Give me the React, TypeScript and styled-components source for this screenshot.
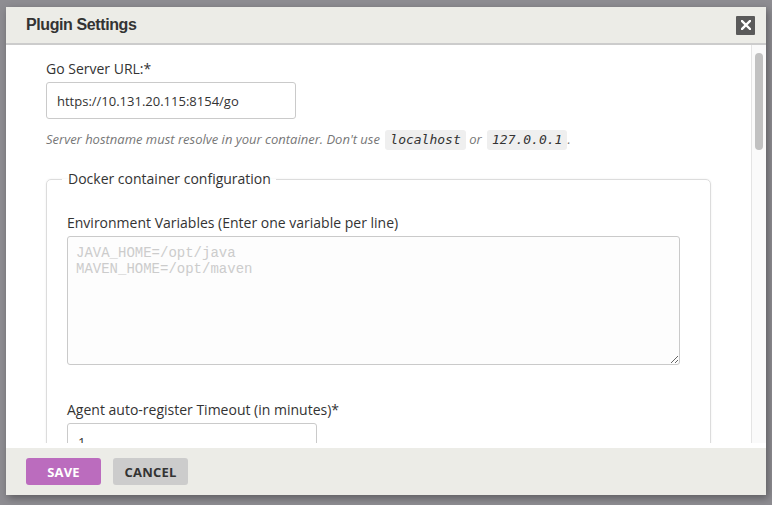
import React from "react";
import styled, { createGlobalStyle } from "styled-components";

const GlobalStyle = createGlobalStyle`
  html, body {
    margin: 0;
    padding: 0;
    background: #8e8d92;
    width: 772px;
    height: 505px;
    overflow: hidden;
  }
  * { box-sizing: border-box; }
`;

const Page = styled.div`
  width: 772px;
  height: 505px;
  padding: 7px 6px 10px 6px;
`;

const Modal = styled.div`
  width: 760px;
  height: 488px;
  display: flex;
  flex-direction: column;
  background: #fff;
  box-shadow: 2px 3px 8px rgba(0, 0, 0, 0.35);
`;

const Header = styled.div`
  height: 38px;
  flex: none;
  display: flex;
  align-items: center;
  justify-content: space-between;
  padding: 0 11px 0 20px;
  background: #ecece7;
  border-bottom: 2px solid #cccccc;
`;

const Title = styled.h2`
  margin: 0;
  font-family: "Liberation Sans", Arial, sans-serif;
  font-weight: bold;
  font-size: 16px;
  letter-spacing: -0.4px;
  color: #333;
`;

const CloseButton = styled.button`
  width: 19px;
  height: 19px;
  padding: 0;
  border: none;
  border-radius: 1px;
  background: #5a5a5a;
  display: flex;
  align-items: center;
  justify-content: center;
  cursor: pointer;
`;

const Body = styled.div`
  flex: 1;
  min-height: 0;
  display: flex;
  padding-bottom: 5px;
  background: #fff;
`;

const ScrollArea = styled.div`
  flex: 1;
  min-width: 0;
  overflow: hidden;
`;

const ScrollTrack = styled.div`
  flex: none;
  width: 15px;
  padding: 8px 3px 0 3px;
  background: #fafafa;
  border-left: 1px solid #e4e4e4;
`;

const ScrollThumb = styled.div`
  height: 97px;
  border-radius: 4px;
  background: #c1c1c1;
`;

const Content = styled.div`
  padding: 14px 40px 30px 40px;
  font-family: "Open Sans", "Noto Sans", sans-serif;
  color: #333;
`;

const Group = styled.div<{ $mb?: number }>`
  margin-bottom: ${(p) => p.$mb ?? 35}px;
`;

const Label = styled.label`
  display: block;
  font-size: 14px;
  line-height: 20px;
  margin-bottom: 3px;
  color: #333;
`;

const TextInput = styled.input`
  display: block;
  width: 250px;
  height: 37px;
  padding: 0 10px;
  border: 1px solid #cacaca;
  border-radius: 3px;
  background: #fff;
  font-family: "Open Sans", "Noto Sans", sans-serif;
  font-size: 13px;
  color: #333;
  outline: none;
`;

const Help = styled.div`
  margin-top: 10px;
  font-size: 13px;
  line-height: 21px;
  font-style: italic;
  color: #777;
`;

const Code = styled.code`
  display: inline-block;
  margin: 0 0 0 2px;
  padding: 2px 5px;
  line-height: 16px;
  border-radius: 3px;
  background: #efefef;
  color: #333;
  font-family: "DejaVu Sans Mono", monospace;
  font-style: italic;
  font-size: 13px;
`;

const Fieldset = styled.fieldset`
  margin: 19px 0 0 0;
  padding: 24px 20px 20px 20px;
  border: 1px solid #dcdcdc;
  border-radius: 5px;
  box-shadow: 0 0 2px rgba(0, 0, 0, 0.08);
  min-width: 0;
`;

const Legend = styled.legend`
  margin-left: -5px;
  padding: 0 5px 0 6px;
  font-size: 14px;
  line-height: 20px;
  color: #333;
`;

const TextArea = styled.textarea`
  display: block;
  width: 613px;
  height: 129px;
  padding: 8px 8px;
  border: 1px solid #cacaca;
  border-radius: 3px;
  background: #fdfdfd;
  font-family: "Liberation Mono", "Courier New", monospace;
  font-size: 14px;
  line-height: 16px;
  color: #333;
  outline: none;
  resize: vertical;
  &::placeholder {
    color: #cccccc;
  }
`;

const Footer = styled.div`
  height: 47px;
  flex: none;
  display: flex;
  align-items: flex-start;
  gap: 12px;
  padding: 10px 20px 0 20px;
  background: #ecece7;
`;

const Button = styled.button<{ $primary?: boolean }>`
  width: 75px;
  height: 27px;
  border: none;
  border-radius: 3px;
  background: ${(p) => (p.$primary ? "#bb6cbe" : "#cccccc")};
  color: ${(p) => (p.$primary ? "#fff" : "#333")};
  font-family: "Open Sans", "Noto Sans", sans-serif;
  font-weight: bold;
  font-size: 13px;
  letter-spacing: 0.2px;
  text-transform: uppercase;
  cursor: pointer;
  padding: 0;
`;

export default function App() {
  return (
    <>
      <GlobalStyle />
      <Page>
        <Modal>
          <Header>
            <Title>Plugin Settings</Title>
            <CloseButton aria-label="Close">
              <svg width="10" height="10" viewBox="0 0 10 10">
                <path d="M1 1 L9 9 M9 1 L1 9" stroke="#fff" strokeWidth="2.4" strokeLinecap="square" />
              </svg>
            </CloseButton>
          </Header>
          <Body>
            <ScrollArea>
              <Content>
                <Group $mb={0}>
                  <Label>Go Server URL:*</Label>
                  <TextInput defaultValue="https://10.131.20.115:8154/go" />
                  <Help>
                    Server hostname must resolve in your container. Don't use <Code>localhost</Code> or <Code>127.0.0.1</Code>.
                  </Help>
                </Group>
                <Fieldset>
                  <Legend>Docker container configuration</Legend>
                  <Group>
                    <Label>Environment Variables (Enter one variable per line)</Label>
                    <TextArea placeholder={"JAVA_HOME=/opt/java\nMAVEN_HOME=/opt/maven"} />
                  </Group>
                  <Group $mb={0}>
                    <Label>Agent auto-register Timeout (in minutes)*</Label>
                    <TextInput defaultValue="1" />
                  </Group>
                </Fieldset>
              </Content>
            </ScrollArea>
            <ScrollTrack>
              <ScrollThumb />
            </ScrollTrack>
          </Body>
          <Footer>
            <Button $primary>Save</Button>
            <Button>Cancel</Button>
          </Footer>
        </Modal>
      </Page>
    </>
  );
}
